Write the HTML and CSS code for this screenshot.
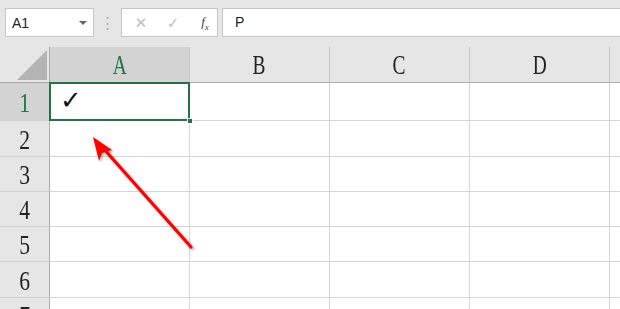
FILE: index.html
```html
<!doctype html>
<html>
<head>
    <meta charset="UTF-8">
    <title>Sheet</title>
    <link rel="stylesheet" href="styles.css">
</head>
<body>
<div class="bar">
    <div class="namebox">
        <span>A1</span>
        <span class="drop"></span>
    </div>
    <div class="sep">⋮</div>
    <div class="btns">
        <span class="btn">✕</span>
        <span class="btn">✓</span>
        <span class="btn fx">f<sub>x</sub></span>
    </div>
    <div class="formula">P</div>
</div>

<div class="sheet">
    <div class="grid">
        <div class="corner"><span class="tri"></span></div>
        <div class="colhead on"><span class="lbl">A</span></div>
        <div class="colhead"><span class="lbl">B</span></div>
        <div class="colhead"><span class="lbl">C</span></div>
        <div class="colhead"><span class="lbl">D</span></div>
        <div class="colhead last"></div>

        <div class="rowhead on"><span class="num">1</span></div>
        <div class="cell sel"><span class="tick">✓</span><i class="handle"></i></div>
        <div class="cell"></div><div class="cell"></div><div class="cell"></div><div class="cell"></div>

        <div class="rowhead"><span class="num">2</span></div>
        <div class="cell"></div><div class="cell"></div><div class="cell"></div><div class="cell"></div><div class="cell"></div>

        <div class="rowhead"><span class="num">3</span></div>
        <div class="cell"></div><div class="cell"></div><div class="cell"></div><div class="cell"></div><div class="cell"></div>

        <div class="rowhead"><span class="num">4</span></div>
        <div class="cell"></div><div class="cell"></div><div class="cell"></div><div class="cell"></div><div class="cell"></div>

        <div class="rowhead"><span class="num">5</span></div>
        <div class="cell"></div><div class="cell"></div><div class="cell"></div><div class="cell"></div><div class="cell"></div>

        <div class="rowhead"><span class="num">6</span></div>
        <div class="cell"></div><div class="cell"></div><div class="cell"></div><div class="cell"></div><div class="cell"></div>

        <div class="rowhead"><span class="num">7</span></div>
        <div class="cell"></div><div class="cell"></div><div class="cell"></div><div class="cell"></div><div class="cell"></div>
    </div>

    <!-- annotation arrow -->
    <svg class="arrow" width="620" height="262" viewBox="0 47 620 262">
        <defs>
            <filter id="sh" x="-20%" y="-20%" width="140%" height="140%">
                <feDropShadow dx="1.5" dy="1.5" stdDeviation="1.2" flood-color="#000" flood-opacity="0.35"/>
            </filter>
        </defs>
        <g filter="url(#sh)">
            <line x1="191" y1="247" x2="103" y2="148" stroke="#f00" stroke-width="3.2" stroke-linecap="round"/>
            <polygon points="93,137 112,150 102,153 99,161" fill="#f00"/>
        </g>
    </svg>
</div>
</body>
</html>
```

FILE: styles.css
```css
* {
    margin: 0;
    padding: 0;
    box-sizing: border-box;
}

body {
    width: 620px;
    height: 309px;
    overflow: hidden;
    background: #e6e6e6;
    font-family: "Liberation Sans", Arial, sans-serif;
}

/* formula bar */
.bar {
    height: 47px;
    display: flex;
    align-items: flex-start;
    padding: 8px 0 0 5px;
}

.namebox {
    width: 89px;
    height: 29px;
    background: #fff;
    border: 1px solid #c6c6c6;
    display: flex;
    align-items: center;
    justify-content: space-between;
    padding: 0 6px 0 6px;
    font-size: 14px;
    color: #222;
}

.drop {
    width: 0;
    height: 0;
    border-left: 4px solid transparent;
    border-right: 4px solid transparent;
    border-top: 4px solid #666;
}

.sep {
    width: 27px;
    height: 29px;
    line-height: 29px;
    text-align: center;
    color: #a8a8a8;
    font-size: 15px;
}

.btns {
    width: 97px;
    height: 29px;
    background: #fff;
    border: 1px solid #c6c6c6;
    display: flex;
    align-items: center;
    padding-left: 10px;
    gap: 14px;
}

.btn {
    width: 18px;
    text-align: center;
    color: #bdbdbd;
    font-size: 15px;
    font-family: "DejaVu Sans", sans-serif;
}

.fx {
    color: #444;
    font-family: "Liberation Serif", serif;
    font-style: italic;
    font-size: 13px;
}

.fx sub {
    font-size: 9px;
}

.formula {
    flex: 1;
    height: 29px;
    margin-left: 4px;
    background: #fff;
    border: 1px solid #c6c6c6;
    border-right: none;
    padding-left: 12px;
    line-height: 27px;
    font-size: 14px;
    color: #222;
}

/* sheet */
.sheet {
    position: relative;
    height: 262px;
    overflow: hidden;
}

.grid {
    display: grid;
    grid-template-columns: 50px 140px 140px 140px 140px 10px;
    grid-template-rows: 36px 38px 36px 35px 35px 35px 36px 35px;
    background: #fff;
}

.corner {
    background: #e6e6e6;
    border-right: 1px solid #ababab;
    border-bottom: 1px solid #ababab;
    position: relative;
}

.tri {
    position: absolute;
    left: 17px;
    top: 3px;
    width: 0;
    height: 0;
    border-left: 30px solid transparent;
    border-bottom: 30px solid #b4b4b4;
}

.colhead {
    background: #e6e6e6;
    border-right: 1px solid #c8c8c8;
    border-bottom: 1px solid #ababab;
    display: flex;
    align-items: center;
    justify-content: center;
    color: #222;
}

.colhead.last {
    border-right: none;
}

.colhead.on,
.rowhead.on {
    background: #d3d3d3;
    color: #217346;
}

.lbl {
    display: inline-block;
    font-family: "Liberation Serif", "Times New Roman", serif;
    font-size: 27px;
    transform: scaleX(0.72);
    padding-top: 2px;
}

.rowhead {
    background: #e6e6e6;
    border-right: 1px solid #ababab;
    border-bottom: 1px solid #d0d0d0;
    display: flex;
    align-items: center;
    justify-content: center;
    color: #222;
}

.num {
    display: inline-block;
    font-family: "Liberation Serif", "Times New Roman", serif;
    font-size: 27px;
    transform: scaleX(0.8);
    padding-top: 3px;
}

.cell {
    border-right: 1px solid #d4d4d4;
    border-bottom: 1px solid #d4d4d4;
}

.cell:nth-child(6n) {
    border-right: none;
}

.sel {
    position: relative;
    padding: 2px 0 0 10px;
}

.sel::after {
    content: "";
    position: absolute;
    left: -1px;
    top: -1px;
    right: -1px;
    bottom: -1px;
    border: 2px solid #217346;
}

.tick {
    font-family: "DejaVu Sans", sans-serif;
    font-size: 26px;
    color: #111;
}

.handle {
    position: absolute;
    right: -4px;
    bottom: -4px;
    width: 6px;
    height: 6px;
    background: #217346;
    border: 1px solid #fff;
    z-index: 2;
}

.arrow {
    position: absolute;
    left: 0;
    top: 0;
    pointer-events: none;
}
```
